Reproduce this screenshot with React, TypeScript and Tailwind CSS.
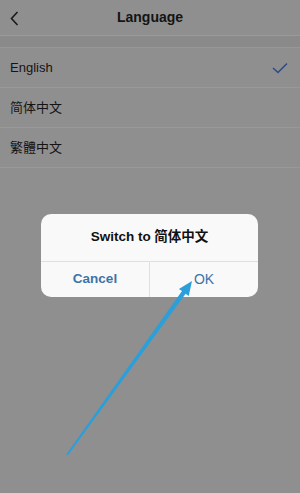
export default function App() {
  const rows = ["English", "简体中文", "繁體中文"];
  return (
    <div
      className="relative w-[300px] h-[493px] overflow-hidden bg-[#8f8f8f] text-[#141414]"
      style={{ fontFamily: '"Liberation Sans", "Noto Sans CJK SC", sans-serif' }}
    >
      {/* Header */}
      <div className="h-[36px] flex items-center relative border-b border-[#9a9a9a]">
        <svg className="absolute left-[10px] top-[11px]" width="9" height="15" viewBox="0 0 9 15">
          <path d="M7.5 1 L1.5 7.5 L7.5 14" fill="none" stroke="#1a1a1a" strokeWidth="1.6" />
        </svg>
        <div className="flex-1 text-center text-[14px] font-bold">Language</div>
      </div>
      <div className="h-[12px] bg-[#8a8a8a] border-b border-[#969696]" />

      {/* Rows */}
      <div className="flex flex-col">
        {rows.map((r, i) => (
          <div key={r} className="h-[40px] flex items-center justify-between pl-[10px] pr-[12px] border-b border-[#999999]">
            <span className="text-[13px]">{r}</span>
            {i === 0 && (
              <svg width="16" height="12" viewBox="0 0 16 12">
                <path d="M1 6 L6 10.5 L15 1.5" fill="none" stroke="#2e4c86" strokeWidth="1.6" />
              </svg>
            )}
          </div>
        ))}
      </div>

      {/* Dialog */}
      <div className="absolute left-[41px] top-[214px] w-[217px] h-[83px] bg-[#f9f9f9] rounded-[10px] flex flex-col overflow-hidden">
        <div className="h-[47px] flex items-center justify-center text-[13.5px] font-bold text-[#111]">
          Switch to 简体中文
        </div>
        <div className="flex-1 flex border-t border-[#e0e0e0]">
          <div className="flex-1 flex items-center justify-center text-[13.5px] font-bold text-[#3f73a6] border-r border-[#e0e0e0]">
            Cancel
          </div>
          <div className="flex-1 flex items-center justify-center text-[14px] text-[#3f73a6]">
            OK
          </div>
        </div>
      </div>

      {/* Annotation arrow */}
      <svg className="absolute left-0 top-0" width="300" height="493" viewBox="0 0 300 493">
        <polygon
          points="66.2,454.4 182,291.1 178.9,288.9 192,281 188.7,295.9 185.6,293.7 67.8,455.6"
          fill="#2a9fd9"
        />
      </svg>
    </div>
  );
}
